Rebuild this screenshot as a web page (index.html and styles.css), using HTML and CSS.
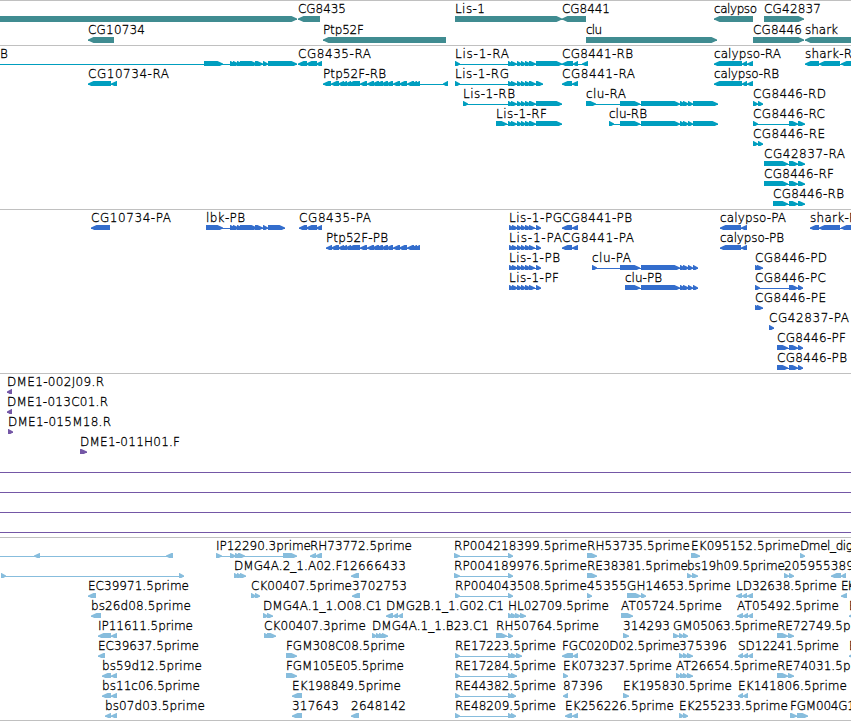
FILE: index.html
```
<!DOCTYPE html>
<html lang="en">

<head>
	<meta charset="UTF-8">
	<meta name="viewport" content="width=device-width, initial-scale=1.0">
	<title>Genome Browser</title>
	<link rel="stylesheet" href="styles.css">
</head>

<body>
	<main class="browser">
		<section class="track genes" id="genes"></section>
		<section class="track transcripts" id="transcripts"></section>
		<section class="track proteins" id="proteins"></section>
		<section class="track clones" id="clones"></section>
		<section class="track ests" id="ests"></section>
	</main>

	<script>
		// Exons shared by several isoforms, as flat start/end pairs
		const lisExons = [508, 513, 511, 517, 517, 522, 521, 526, 525, 531, 529, 536];
		const lisCds = [509, 514, 512, 518, 517, 522, 521, 526, 525, 531, 529, 535, 536, 541];
		const cluExons = [620, 640, 641, 680, 680, 685, 683, 689, 688, 693];
		const ptpExons = [331, 339, 338, 344, 341, 347, 345, 351, 348, 360, 360, 367, 367, 374, 372, 379, 376, 383, 381, 388, 386, 393, 393, 400, 399, 407, 407, 414, 411, 417, 414, 420];

		// Feature: [label, label start, label end, strand, exons]
		const tracks = {
			genes: [
				[
					['', 0, 0, 1, [-10, 297]],
					['CG8435', 298, 346, -1, [298, 320]],
					['Lis-1', 455, 485, 1, [455, 562]],
					['CG8441', 562, 610, -1, [562, 586]],
					['calypso', 714, 757, -1, [714, 753]],
					['CG42837', 764, 821, 1, [764, 804]]
				],
				[
					['CG10734', 88, 145, -1, [88, 114]],
					['Ptp52F', 323, 364, -1, [323, 446]],
					['clu', 586, 602, 1, [586, 717]],
					['CG8446', 753, 802, 1, [753, 804]],
					['shark', 805, 838, -1, [805, 870]]
				]
			],
			transcripts: [
				[
					['B', 0, 7, 1, [-20, -10, 204, 223, 230, 236, 233, 239, 237, 243, 240, 257, 255, 263, 263, 268, 268, 297]],
					['CG8435-RA', 298, 371, -1, [298, 307, 306, 317, 316, 322]],
					['Lis-1-RA', 455, 509, 1, [455, 460, ...lisExons, 536, 562]],
					['CG8441-RB', 562, 633, -1, [562, 573, 573, 578, 582, 588]],
					['calypso-RA', 714, 781, -1, [714, 742, 742, 747, 747, 753]],
					['shark-RA', 805, 860, -1, [805, 819, 819, 840, 841, 870]]
				],
				[
					['CG10734-RA', 88, 169, -1, [88, 111, 111, 117]],
					['Ptp52F-RB', 323, 386, -1, [323, 331, ...ptpExons, 443, 448]],
					['Lis-1-RG', 455, 509, 1, [455, 460, ...lisExons, 536, 543]],
					['CG8441-RA', 562, 635, -1, [562, 572, 572, 578]],
					['calypso-RB', 714, 779, -1, [714, 742, 742, 747, 747, 753]]
				],
				[
					['Lis-1-RB', 463, 515, 1, [463, 468, ...lisExons, 536, 562]],
					['clu-RA', 586, 626, 1, [586, 596, ...cluExons, 693, 718]],
					['CG8446-RD', 753, 826, 1, [753, 758, 758, 763]]
				],
				[
					['Lis-1-RF', 496, 547, 1, [496, 507, ...lisExons, 536, 562]],
					['clu-RB', 609, 647, 1, [609, 614, ...cluExons, 693, 718]],
					['CG8446-RC', 753, 825, 1, [753, 758, 789, 798, 798, 805]]
				],
				[['CG8446-RE', 753, 825, 1, [753, 758, 758, 763]]],
				[['CG42837-RA', 764, 845, 1, [764, 788, 789, 798, 798, 805]]],
				[['CG8446-RF', 764, 834, 1, [764, 788, 789, 798, 798, 805]]],
				[['CG8446-RB', 773, 844, 1, [773, 788, 789, 798, 798, 805]]]
			],
			proteins: [
				[
					['CG10734-PA', 91, 171, -1, [91, 110]],
					['lbk-PB', 206, 245, 1, [206, 223, 230, 236, 233, 239, 237, 243, 240, 257, 255, 263, 263, 268, 268, 285]],
					['CG8435-PA', 299, 371, -1, [299, 307, 306, 317, 316, 322]],
					['Lis-1-PG', 509, 562, 1, lisCds],
					['CG8441-PB', 562, 632, -1, [562, 572, 572, 578]],
					['calypso-PA', 720, 786, -1, [720, 741, 741, 747]],
					['shark-PA', 810, 864, -1, [810, 819, 819, 840, 841, 870]]
				],
				[
					['Ptp52F-PB', 326, 388, -1, [326, 332, ...ptpExons]],
					['Lis-1-PA', 509, 562, 1, lisCds],
					['CG8441-PA', 562, 634, -1, [562, 572, 572, 578]],
					['calypso-PB', 720, 784, -1, [720, 741, 741, 747]]
				],
				[
					['Lis-1-PB', 509, 560, 1, lisCds],
					['clu-PA', 592, 631, 1, [592, 597, ...cluExons, 693, 698]],
					['CG8446-PD', 755, 827, 1, [755, 760, 757, 763]]
				],
				[
					['Lis-1-PF', 509, 559, 1, lisCds],
					['clu-PB', 625, 662, 1, [625, 640, ...cluExons.slice(2), 693, 698]],
					['CG8446-PC', 755, 826, 1, [755, 760, 789, 798, 798, 803]]
				],
				[['CG8446-PE', 755, 826, 1, [755, 760, 757, 763]]],
				[['CG42837-PA', 769, 849, 1, [769, 774]]],
				[['CG8446-PF', 777, 846, 1, [777, 788, 789, 798, 798, 803]]],
				[['CG8446-PB', 777, 847, 1, [777, 788, 789, 798, 798, 803]]]
			],
			clones: [
				[['DME1-002J09.R', 7, 104, -1, [7, 12]]],
				[['DME1-013C01.R', 7, 108, -1, [7, 12]]],
				[['DME1-015M18.R', 8, 111, 1, [8, 13]]],
				[['DME1-011H01.F', 80, 180, 1, [80, 87]]],
				[['', 0, 0, 1, [-20, -10, 870, 880]]],
				[['', 0, 0, 1, [-20, -10, 870, 880]]],
				[['', 0, 0, 1, [-20, -10, 870, 880]]],
				[['', 0, 0, 1, [-20, -10, 870, 880]]]
			],
			ests: [
				[
					['', 0, 0, -1, [-20, -10, 34, 40, 166, 173]],
					['IP12290.3prime', 216, 311, 1, [216, 222, 230, 236, 235, 241, 238, 245, 283, 297]],
					['RH73772.5prime', 310, 412, -1, [310, 316, 315, 322]],
					['RP004218399.5prime', 454, 587, 1, [454, 460, 508, 513]],
					['RH53735.5prime', 587, 690, 1, [587, 597]],
					['EK095152.5prime', 691, 800, 1, [691, 700]],
					['Dmel_dig', 800, 853, 1, [800, 805]]
				],
				[
					['', 0, 0, 1, [1, 6, 179, 184]],
					['DMG4A.2_1.A02.F1', 234, 350, 1, [234, 239, 237, 242, 240, 246]],
					['2666433', 350, 406, -1, [351, 359]],
					['RP004189976.5prime', 454, 587, 1, [454, 460, 508, 513]],
					['RE38381.5prime', 587, 688, 1, [587, 597]],
					['bs19h09.5prime', 687, 785, 1, [687, 692, 692, 698]],
					['205955389', 784, 854, 1, [784, 789, 789, 794]],
					['', 0, 0, -1, [831, 841, 841, 846]]
				],
				[
					['EC39971.5prime', 88, 189, -1, [88, 96]],
					['CK00407.5prime', 251, 352, 1, [251, 256, 255, 260]],
					['3702753', 352, 407, -1, [352, 360]],
					['RP004043508.5prime', 455, 587, 1, [455, 460, 508, 513]],
					['45355', 587, 627, 1, [587, 592]],
					['GH14653.5prime', 627, 731, 1, [627, 641, 641, 646]],
					['LD32638.5prime', 736, 837, -1, [736, 742, 742, 747, 747, 753]],
					['EK', 841, 855, -1, [841, 847]]
				],
				[
					['bs26d08.5prime', 91, 191, -1, [91, 101]],
					['DMG4A.1_1.O08.C1', 263, 382, 1, [263, 268, 267, 273]],
					['DMG2B.1_1.G02.C1', 386, 504, -1, [386, 393, 393, 398, 398, 403]],
					['HL02709.5prime', 508, 609, 1, [508, 513, 511, 517, 515, 521, 520, 526]],
					['AT05724.5prime', 621, 722, 1, [621, 633]],
					['AT05492.5prime', 737, 839, -1, [737, 743, 743, 748, 748, 753]],
					['E', 849, 857, -1, [849, 857]]
				],
				[
					['IP11611.5prime', 98, 193, -1, [98, 111, 111, 117]],
					['CK00407.3prime', 264, 366, 1, [264, 270, 267, 276]],
					['DMG4A.1_1.B23.C1', 372, 489, 1, [372, 377, 376, 381, 379, 385, 382, 388]],
					['RH50764.5prime', 496, 599, 1, [496, 507, 508, 513]],
					['314293', 623, 670, 1, [623, 629]],
					['GM05063.5prime', 673, 777, 1, [673, 679, 679, 684, 683, 688]],
					['RE72749.5prime', 777, 878, 1, [777, 788, 788, 794]]
				],
				[
					['EC39637.5prime', 98, 199, -1, [98, 105]],
					['FGM308C08.5prime', 286, 405, 1, [286, 297]],
					['RE17223.5prime', 455, 556, 1, [455, 460, 508, 513, 511, 517, 516, 522]],
					['FGC020D02.5prime', 562, 680, -1, [562, 573, 573, 578]],
					['375396', 679, 727, 1, [679, 684, 683, 688, 687, 693]],
					['SD12241.5prime', 738, 839, -1, [738, 743, 743, 748, 748, 753]],
					['E', 849, 857, -1, [849, 857]]
				],
				[
					['bs59d12.5prime', 102, 202, -1, [102, 111, 111, 117]],
					['FGM105E05.5prime', 286, 404, 1, [286, 297]],
					['RE17284.5prime', 455, 556, 1, [455, 460, 508, 513, 511, 517]],
					['EK073237.5prime', 563, 672, 1, [563, 568]],
					['AT26654.5prime', 676, 777, 1, [676, 681, 680, 685, 683, 688, 687, 693]],
					['RE74031.5prime', 777, 878, 1, [777, 788, 788, 794]]
				],
				[
					['bs11c06.5prime', 102, 200, -1, [102, 111, 111, 117]],
					['EK198849.5prime', 292, 401, -1, [292, 302]],
					['RE44382.5prime', 455, 556, 1, [455, 460, 508, 513, 511, 516]],
					['87396', 563, 603, -1, [563, 568]],
					['EK195830.5prime', 623, 732, 1, [623, 629]],
					['EK141806.5prime', 738, 847, -1, [738, 743, 743, 748]]
				],
				[
					['bs07d03.5prime', 105, 205, -1, [105, 111, 111, 117]],
					['317643', 292, 339, -1, [292, 302]],
					['2648142', 351, 406, -1, [351, 359]],
					['RE48209.5prime', 455, 556, 1, [455, 460, 508, 513, 511, 516]],
					['EK256226.5prime', 565, 674, -1, [565, 572, 572, 578]],
					['EK255233.5prime', 679, 788, 1, [679, 684, 683, 688]],
					['FGM004G1', 790, 855, 1, [790, 797, 797, 808]]
				]
			]
		};

		const SVG = 'http://www.w3.org/2000/svg';

		function add(parent, tag, attrs) {
			const el = document.createElementNS(SVG, tag);
			for (const key in attrs) el.setAttribute(key, attrs[key]);
			parent.appendChild(el);
			return el;
		}

		// Box with a pointed end; short exons are plain triangles
		function exonPoints(start, end, strand) {
			const head = Math.min(5.5, end - start - 0.5);
			const tip = strand > 0 ? end : start;
			const tail = strand > 0 ? start : end;
			const neck = tip - strand * head;
			return `${tail},15 ${neck},15 ${tip},17.4 ${tip},18.6 ${neck},21 ${tail},21`;
		}

		function drawFeature(svg, [label, x, labelEnd, strand, exons]) {
			const start = exons[0];
			const end = exons[exons.length - 1];
			add(svg, 'rect', { x: start, y: 18, width: end - start, height: 1 });
			for (let i = 0; i < exons.length; i += 2) {
				add(svg, 'polygon', { points: exonPoints(exons[i], exons[i + 1], strand) });
			}
			if (label) {
				const text = add(svg, 'text', { x: x, y: 12, textLength: labelEnd - x });
				text.textContent = label;
			}
		}

		for (const id in tracks) {
			const track = document.getElementById(id);
			tracks[id].forEach(features => {
				const svg = add(track, 'svg', { class: 'row' });
				features.forEach(feature => drawFeature(svg, feature));
			});
		}
	</script>
</body>

</html>
```
FILE: styles.css
```
body {
	margin: 0;
	background-color: white;
	font-family: 'DejaVu Sans', sans-serif;
	font-size: 12px;
	font-weight: 200;
	overflow: hidden;
}

.browser {
	width: 851px;
	height: 720px;
	border-bottom: 1px solid #c0c0c0;
}

.track {
	border-top: 1px solid #c0c0c0;
	padding-bottom: 3px;
}

.row {
	display: block;
	width: 100%;
	height: 20px;
	overflow: hidden;
}

.row text {
	fill: black;
	stroke: black;
	stroke-width: 0.3px;
}

.genes {
	fill: #408c91;
	padding-bottom: 2px;
}

.genes .row {
	height: 21px;
}

.transcripts {
	fill: #009ebf;
}

.proteins {
	fill: #336dcc;
}

.clones {
	fill: #7457a6;
}

.ests {
	fill: #87bddd;
	padding-bottom: 2px;
}
```
